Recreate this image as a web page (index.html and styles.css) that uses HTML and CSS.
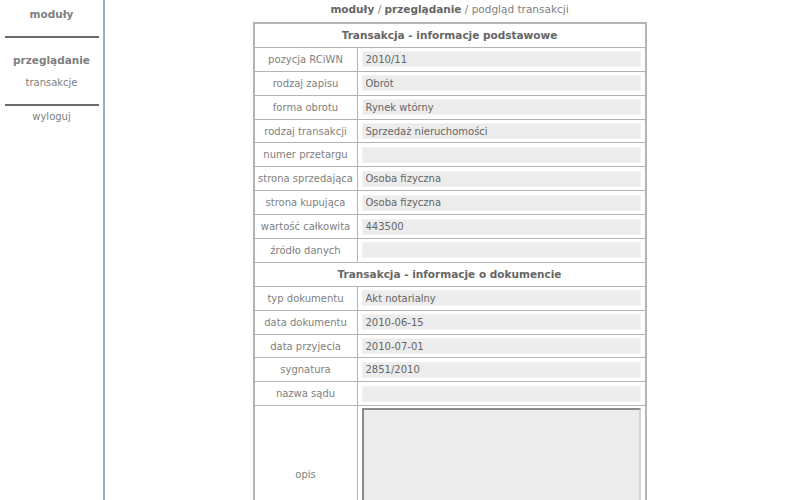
FILE: index.html
```html
<!DOCTYPE html>
<html>
<head>
  <meta charset="utf-8">
  <title>Podgląd transakcji</title>
  <link rel="stylesheet" href="styles.css">
</head>
<body>
  <div class="layout">
    <div class="menu">
      <a class="menu-head" href="#">moduły</a>
      <hr class="menu-line">
      <a class="menu-head" href="#">przeglądanie</a>
      <a class="menu-item" href="#">transakcje</a>
      <hr class="menu-line">
      <a class="menu-item" href="#">wyloguj</a>
    </div>

    <div class="content">
      <div class="path">
        <b>moduły</b> / <b>przeglądanie</b> / podgląd transakcji
      </div>

      <table class="details">
        <tr><th colspan="2">Transakcja - informacje podstawowe</th></tr>
        <tr><td class="label">pozycja RCiWN</td><td><input class="field" value="2010/11" readonly></td></tr>
        <tr><td class="label">rodzaj zapisu</td><td><input class="field" value="Obrót" readonly></td></tr>
        <tr><td class="label">forma obrotu</td><td><input class="field" value="Rynek wtórny" readonly></td></tr>
        <tr><td class="label">rodzaj transakcji</td><td><input class="field" value="Sprzedaż nieruchomości" readonly></td></tr>
        <tr><td class="label">numer przetargu</td><td><input class="field" value="" readonly></td></tr>
        <tr><td class="label">strona sprzedająca</td><td><input class="field" value="Osoba fizyczna" readonly></td></tr>
        <tr><td class="label">strona kupująca</td><td><input class="field" value="Osoba fizyczna" readonly></td></tr>
        <tr><td class="label">wartość całkowita</td><td><input class="field" value="443500" readonly></td></tr>
        <tr><td class="label">źródło danych</td><td><input class="field" value="" readonly></td></tr>

        <tr><th colspan="2">Transakcja - informacje o dokumencie</th></tr>
        <tr><td class="label">typ dokumentu</td><td><input class="field" value="Akt notarialny" readonly></td></tr>
        <tr><td class="label">data dokumentu</td><td><input class="field" value="2010-06-15" readonly></td></tr>
        <tr><td class="label">data przyjecia</td><td><input class="field" value="2010-07-01" readonly></td></tr>
        <tr><td class="label">sygnatura</td><td><input class="field" value="2851/2010" readonly></td></tr>
        <tr><td class="label">nazwa sądu</td><td><input class="field" value="" readonly></td></tr>
        <tr><td class="label">opis</td><td><textarea class="area" readonly></textarea></td></tr>
      </table>
    </div>
  </div>
</body>
</html>
```

FILE: styles.css
```css
body {
  margin: 0;
  font-family: "DejaVu Sans", Verdana, sans-serif;
  font-size: 10px;
  color: #777;
  background: #fff;
}

a {
  text-decoration: none;
}

.layout {
  display: flex;
  min-height: 100vh;
}

/* lewe menu */
.menu {
  width: 103px;
  flex-shrink: 0;
  border-right: 2px solid #8db4c2;
  display: flex;
  flex-direction: column;
  align-items: center;
  padding-top: 8px;
}

.menu-head {
  font-weight: bold;
  color: #808080;
  font-size: 10.5px;
}

.menu-item {
  color: #808080;
  margin-top: 11px;
}

.menu-line {
  width: 94px;
  margin: 16px 0 16px;
  border: 0;
  border-top: 2px solid #6b6b6b;
}

.menu-line + .menu-item {
  margin-top: -11px;
}

/* treść */
.content {
  flex: 1;
  display: flex;
  flex-direction: column;
  align-items: center;
  padding-top: 3px;
}

.path {
  font-size: 10.5px;
  color: #808080;
  margin-bottom: 7px;
  margin-left: 4px;
}

.path b {
  color: #666;
}

.details {
  width: 394px;
  margin-left: 4px;
  border-collapse: collapse;
  border: 2px solid #b4b4b4;
}

.details th,
.details td {
  border: 1px solid #b4b4b4;
  height: 22.9px;
  padding: 0;
}

.details th {
  font-size: 10.5px;
  color: #666;
}

.details .label {
  width: 102px;
  text-align: center;
  color: #808080;
}

.details td + td {
  padding: 0 4px;
}

.field {
  display: block;
  width: 100%;
  box-sizing: border-box;
  height: 16px;
  border: 1px solid #f2f2f2;
  background: #ececec;
  font-family: inherit;
  font-size: 10px;
  color: #666;
  padding: 0 3px;
}

.area {
  display: block;
  width: 100%;
  box-sizing: border-box;
  height: 132px;
  margin: 2px 0;
  resize: none;
  background: #ececec;
  border: 2px solid #d4d4d4;
  border-top-color: #8a8a8a;
  border-left-color: #8a8a8a;
}
```
